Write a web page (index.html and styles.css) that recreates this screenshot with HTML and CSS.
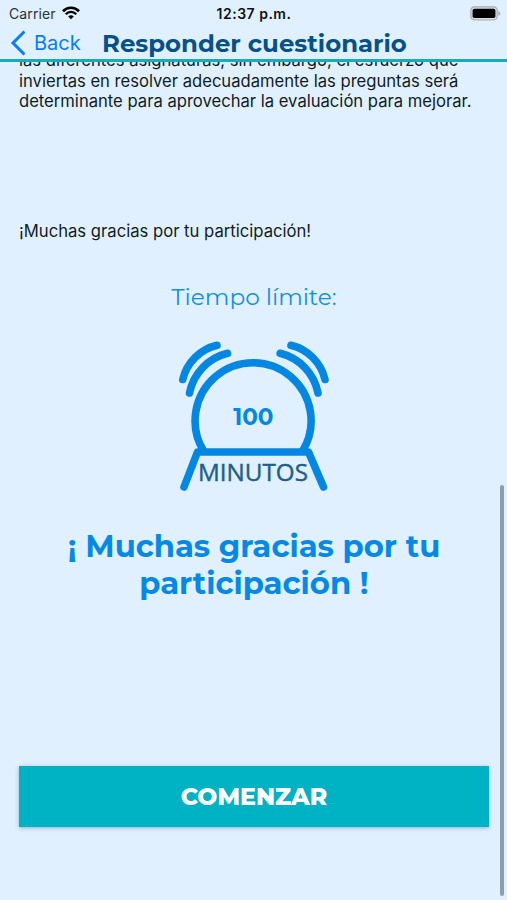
FILE: index.html
```
<!DOCTYPE html>
<html lang="es">
<head>
<meta charset="utf-8" />
<title>Responder cuestionario</title>
<link rel="stylesheet" href="styles.css">
</head>
<body>
<div class="screen">
	<header class="header">
		<div class="status">
			<div class="carrier">
				<span class="carrier-name">Carrier</span>
				<svg class="wifi" width="18" height="14" viewBox="0 0 18 14">
					<path d="M1 5.2 A11 11 0 0 1 17 5.2" fill="none" stroke="#000" stroke-width="2.7" />
					<path d="M3.8 8.2 A7 7 0 0 1 14.2 8.2" fill="none" stroke="#000" stroke-width="2.4" />
					<path d="M6.2 10.5 A4 4 0 0 1 11.8 10.5 L9 13.3 Z" fill="#000" />
				</svg>
			</div>
			<span class="clock">12:37 p.m.</span>
			<svg class="battery" width="31" height="15" viewBox="0 0 31 15">
				<rect x="0.8" y="0.8" width="26.4" height="13.2" rx="3.6" fill="#d3dde4" stroke="#a5adb3" stroke-width="1.2" />
				<rect x="2.6" y="2.7" width="22.8" height="9.4" rx="1.8" fill="#000" />
				<path d="M28.4 5 Q30.4 5.8 30.4 7.4 Q30.4 9 28.4 9.8 Z" fill="#a5adb3" />
			</svg>
		</div>
		<nav class="nav">
			<a class="back">
				<svg width="16" height="26" viewBox="0 0 16 26">
					<path d="M15.5 1.5 L4 13 L15.5 24.5" fill="none" stroke="#087bff" stroke-width="3" />
				</svg>
				<span class="back-text">Back</span>
			</a>
			<h1 class="title">Responder cuestionario</h1>
		</nav>
	</header>

	<main class="content">
		<p class="intro">
			<span class="line">las diferentes asignaturas, sin embargo, el esfuerzo que</span>
			<span class="line">inviertas en resolver adecuadamente las preguntas será</span>
			<span class="line">determinante para aprovechar la evaluación para mejorar.</span>
		</p>
		<p class="thanks">¡Muchas gracias por tu participación!</p>
		<h2 class="limit">Tiempo límite:</h2>
		<svg class="alarm" width="156" height="156" viewBox="176 338 156 156">
			<g fill="none" stroke="#0487e2" stroke-width="7.6" stroke-linecap="round" stroke-linejoin="round">
				<path d="M203.6 451 A58 58 0 1 1 302.6 451" />
				<path d="M184 487 L197.5 452 H308.5 L323.5 487" />
				<path d="M182.8 379.5 A46 46 0 0 1 217 345.3" />
				<path d="M189.5 393 A51 51 0 0 1 227.5 353.3" />
				<path d="M291 345.3 A46 46 0 0 1 325 379.5" />
				<path d="M280.2 353.3 A51 51 0 0 1 318 393" />
			</g>
			<text class="number" x="253.3" y="424.7" text-anchor="middle">100</text>
			<text class="minutes" x="198" y="480.5" textLength="110" lengthAdjust="spacingAndGlyphs">MINUTOS</text>
		</svg>
		<h2 class="message">
			<span>¡ Muchas gracias por tu</span>
			<span>participación !</span>
		</h2>
		<button class="start">COMENZAR</button>
	</main>
	<div class="scrollbar"></div>
</div>
</body>
</html>
```
FILE: styles.css
```
* {
	box-sizing: border-box;
}
body, h1, h2, p {
	margin: 0;
}
body {
	background-color: #e0f0ff;
	font-family: Inter, "Liberation Sans", sans-serif;
	color: #111c24;
}
.screen {
	position: relative;
	display: flex;
	flex-direction: column;
	height: 900px;
	overflow: hidden;
}
.header {
	flex: none;
	height: 62px;
	border-bottom: 3px solid #16acba;
}
.status {
	display: grid;
	grid-template-columns: 1fr auto 1fr;
	align-items: center;
	height: 28px;
	padding: 0 6px 1px 9px;
	font-size: 14px;
}
.carrier {
	display: flex;
	align-items: center;
	gap: 6px;
	color: #27323b;
}
.carrier-name {
	letter-spacing: 0.1px;
}
.wifi {
	margin-bottom: 1px;
}
.clock {
	margin-right: 2px;
	font-weight: 600;
	letter-spacing: 0.5px;
	color: #111;
}
.battery {
	justify-self: end;
	margin-bottom: 1px;
}
.nav {
	display: flex;
	align-items: center;
	height: 30px;
	padding-left: 9px;
}
.back {
	display: flex;
	align-items: center;
	gap: 9px;
	width: 93px;
	font-size: 20px;
	color: #087bff;
}
.title {
	font-family: Montserrat, Inter, sans-serif;
	font-size: 24.4px;
	font-weight: 700;
	color: #075189;
	white-space: nowrap;
}

.content {
	display: flex;
	flex-direction: column;
	flex: 1;
	min-height: 0;
	padding: 0 18px 0 19px;
	overflow: hidden;
}
.intro {
	margin-top: -12px;
	font-size: 16.62px;
	line-height: 20.5px;
}
.line {
	display: block;
	white-space: nowrap;
}
.thanks {
	margin-top: 109px;
	font-size: 16.65px;
	line-height: 20px;
}
.limit {
	margin-top: 41px;
	font-family: Montserrat, Inter, sans-serif;
	font-size: 23.2px;
	font-weight: 400;
	line-height: 30px;
	text-align: center;
	color: #138fe3;
}
.alarm {
	flex: none;
	margin: 26px 0 0 157px;
}
.number {
	font-family: Montserrat, Inter, sans-serif;
	font-size: 23px;
	font-weight: 700;
	font-variant-numeric: lining-nums;
	fill: #0487e2;
}
.minutes {
	font-family: "Open Sans", "Noto Sans", sans-serif;
	font-size: 23px;
	font-weight: 400;
	fill: #1c5f8e;
	stroke: #1c5f8e;
	stroke-width: 0.4px;
}
.message {
	margin-top: 34px;
	font-family: Montserrat, Inter, sans-serif;
	font-size: 30.7px;
	font-weight: 700;
	line-height: 37.5px;
	text-align: center;
	color: #0489e6;
}
.message span {
	display: block;
}
.start {
	flex: none;
	height: 61px;
	margin-top: 163px;
	border: 0;
	background-color: #00b3c4;
	box-shadow: 0 1px 4px rgba(0, 60, 90, 0.35);
	font-family: Montserrat, Inter, sans-serif;
	font-size: 23.7px;
	font-weight: 800;
	color: #fff;
}
.scrollbar {
	position: absolute;
	top: 485px;
	right: 3px;
	width: 4px;
	height: 411px;
	border-radius: 2px;
	background-color: #8c9dab;
}
```
